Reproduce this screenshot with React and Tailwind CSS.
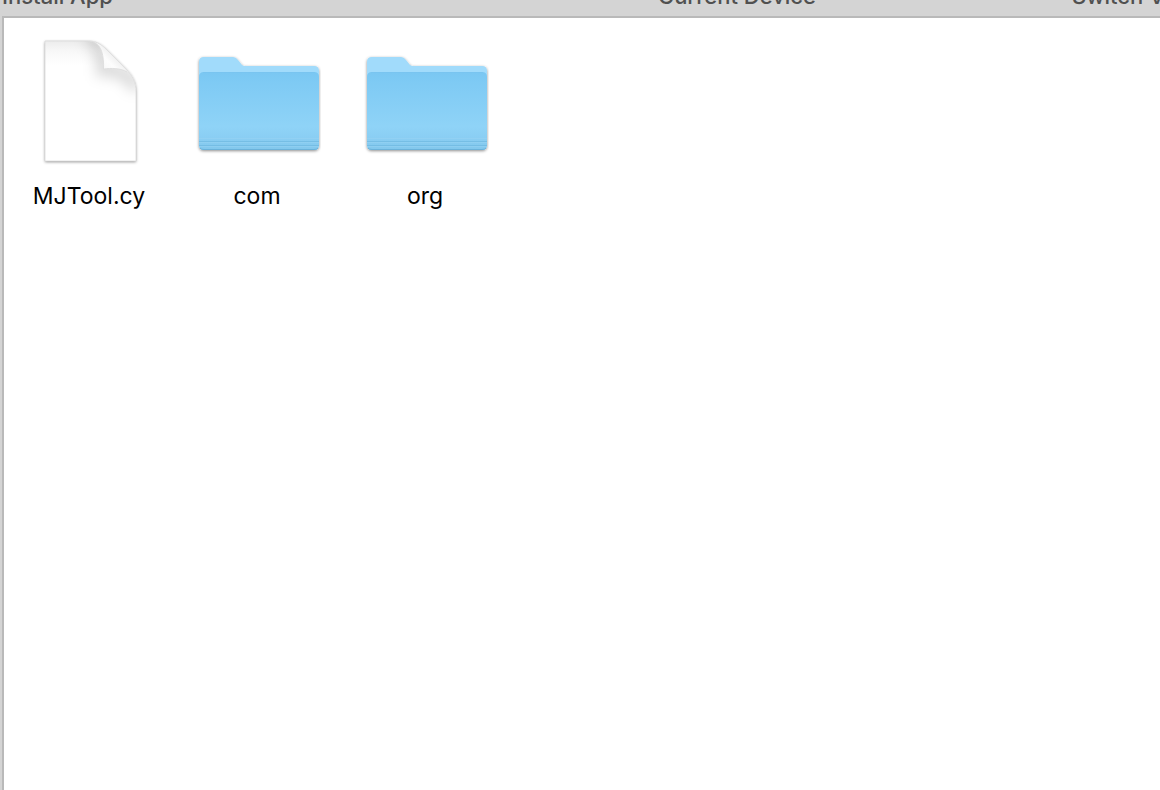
import React from "react";

const PAGE = "M18 8H61C69 8 74 11 79 16L99 36C106 43 109 50 109 59V128H18Z";

function FileIcon() {
  return (
    <svg viewBox="-2 1 128 136" className="h-[136px] w-32" aria-hidden="true">
      <defs>
        <clipPath id="pageClip">
          <path d={PAGE} />
        </clipPath>
        <linearGradient id="pageTop" x1="0" y1="0" x2="0" y2="1">
          <stop offset="0" stopColor="#ececec" />
          <stop offset="0.08" stopColor="#f7f7f7" />
          <stop offset="0.2" stopColor="#ffffff" />
        </linearGradient>
        <linearGradient id="fold" gradientUnits="userSpaceOnUse" x1="89" y1="24" x2="77" y2="36">
          <stop offset="0" stopColor="#efefef" />
          <stop offset="0.5" stopColor="#fdfdfd" />
          <stop offset="1" stopColor="#f8f8f8" />
        </linearGradient>
        <filter id="pageShadow" x="-10%" y="-10%" width="120%" height="120%">
          <feDropShadow dx="0" dy="1" stdDeviation="1.4" floodColor="#000000" floodOpacity="0.45" />
        </filter>
        <filter id="soft" x="-80%" y="-80%" width="260%" height="260%">
          <feGaussianBlur stdDeviation="7" />
        </filter>
      </defs>
      <path d={PAGE} fill="#ffffff" filter="url(#pageShadow)" />
      <path d={PAGE} fill="url(#pageTop)" />
      <g clipPath="url(#pageClip)">
        <path
          d="M60 4C74 8 76 22 76 37C90 36 102 40 110 56"
          fill="none"
          stroke="#000000"
          strokeOpacity="0.17"
          strokeWidth="12"
          filter="url(#soft)"
        />
      </g>
      <path d="M62 8C75 9 77 23 76.500 36C84 35 94 35 101 39L79 16C74 11 69 8 62 8Z" fill="url(#fold)" />
      <path
        d="M66 9C75 12 77 23 76.500 36C84 35 94 35 100 39"
        fill="none"
        stroke="#dadada"
        strokeWidth="0.8"
      />
      <path d={PAGE} fill="none" stroke="#dadada" strokeWidth="0.8" />
    </svg>
  );
}

function FolderIcon() {
  return (
    <svg viewBox="-2 1 128 136" className="h-[136px] w-32" aria-hidden="true">
      <defs>
        <linearGradient id="folderFront" x1="0" y1="0" x2="0" y2="1">
          <stop offset="0" stopColor="#7ac7f2" />
          <stop offset="0.12" stopColor="#7ecaf4" />
          <stop offset="0.7" stopColor="#8fd3f7" />
          <stop offset="0.84" stopColor="#8acef3" />
          <stop offset="1" stopColor="#82c8ed" />
        </linearGradient>
        <filter id="folderShadow" x="-10%" y="-10%" width="120%" height="125%">
          <feDropShadow dx="0" dy="1" stdDeviation="1.6" floodColor="#000000" floodOpacity="0.45" />
        </filter>
      </defs>
      <g filter="url(#folderShadow)">
        <path
          d="M4 29Q4 24 9 24H38Q41 24 43 27L47 32Q48 33 50 33H119Q124 33 124 38V112Q124 117 119 117H9Q4 117 4 112Z"
          fill="#a1dbfb"
        />
      </g>
      <path
        d="M4 44Q4 39 9 39H119Q124 39 124 44V112Q124 117 119 117H9Q4 117 4 112Z"
        fill="url(#folderFront)"
      />
      <path d="M8 39.500H120" stroke="#78c3ee" strokeWidth="0.6" />
      <path d="M4 105.500H124M4 109.500H124M4 113.500H124" stroke="#a1d8f5" strokeWidth="1" opacity="0.35" />
      <path d="M4 108.500H124M4 112.500H124" stroke="#62afd8" strokeWidth="1" opacity="0.45" />
      <path d="M5 115Q6 116.500 9 116.500H119Q122 116.500 123 115" fill="none" stroke="#6bb2da" strokeWidth="1" />
    </svg>
  );
}

const entries = [
  { name: "MJTool.cy", Icon: FileIcon },
  { name: "com", Icon: FolderIcon },
  { name: "org", Icon: FolderIcon },
];

const actions = ["Install App", "Current Device", "Switch View"];

export default function App() {
  return (
    <div className="flex h-screen flex-col overflow-hidden bg-[#d4d4d4] pl-0.5 font-['Inter','Liberation_Sans',sans-serif]">
      <header className="grid h-4 shrink-0 grid-cols-[656fr_414fr_88fr] items-end overflow-hidden pb-2">
        {actions.map((label) => (
          <button
            key={label}
            type="button"
            className="min-w-0 overflow-hidden text-left text-[22px] leading-6 font-medium whitespace-nowrap text-[#505050]"
          >
            {label}
          </button>
        ))}
      </header>
      <main className="flex-1 border-t-2 border-l-2 border-[#b9b9b9] bg-white pt-4">
        <ul className="flex flex-wrap">
          {entries.map(({ name, Icon }) => (
            <li key={name} className="w-[168px]">
              <button type="button" className="flex w-full flex-col items-center gap-3 pl-0.5">
                <Icon />
                <span className="text-[23px] leading-7 text-black">{name}</span>
              </button>
            </li>
          ))}
        </ul>
      </main>
    </div>
  );
}
